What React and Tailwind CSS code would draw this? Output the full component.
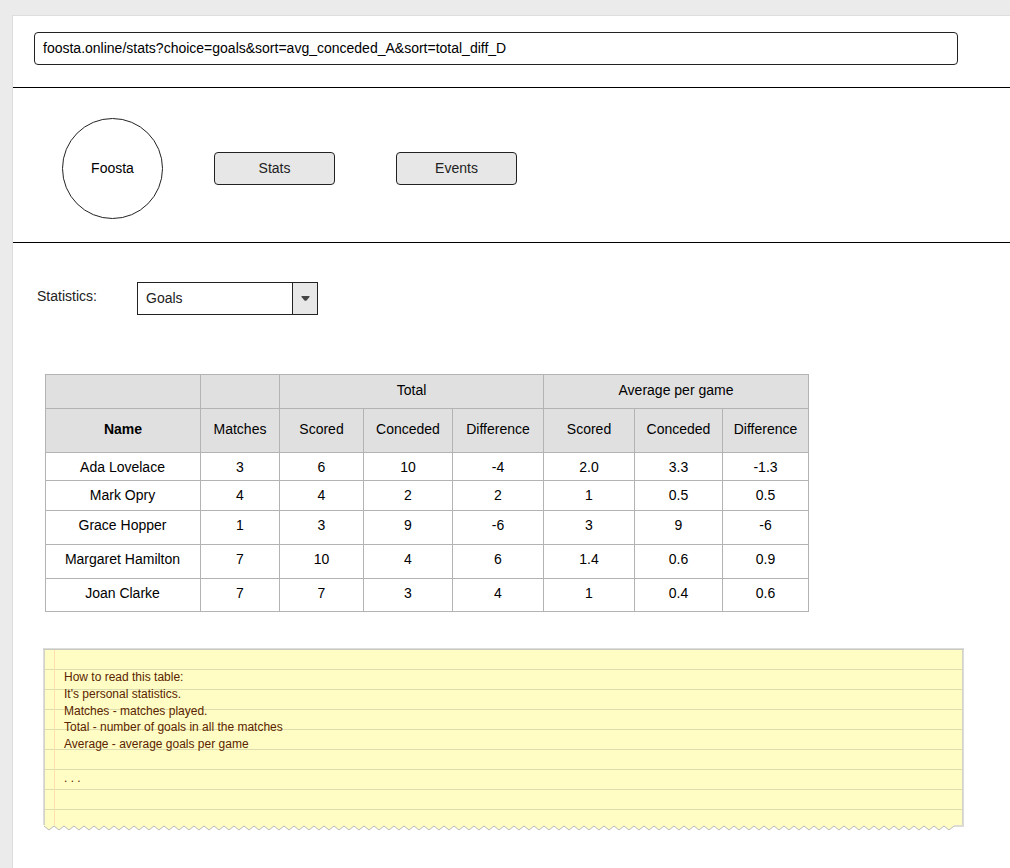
const columns = ['Name', 'Matches', 'Scored', 'Conceded', 'Difference', 'Scored', 'Conceded', 'Difference'];

const rows = [
  ['Ada Lovelace', '3', '6', '10', '-4', '2.0', '3.3', '-1.3'],
  ['Mark Opry', '4', '4', '2', '2', '1', '0.5', '0.5'],
  ['Grace Hopper', '1', '3', '9', '-6', '3', '9', '-6'],
  ['Margaret Hamilton', '7', '10', '4', '6', '1.4', '0.6', '0.9'],
  ['Joan Clarke', '7', '7', '3', '4', '1', '0.4', '0.6'],
];

const noteLines = [
  'How to read this table:',
  "It's personal statistics.",
  'Matches - matches played.',
  'Total - number of goals in all the matches',
  'Average - average goals per game',
  '\u00a0',
  '. . .',
];

// Torn paper edge: one tooth every 10 units, then a flat end.
const teeth = Array.from({ length: 91 }, (_, i) => `L${i * 10 + 6} 5 L${i * 10 + 11} 1`).join(' ');
const edge = `M1 1 ${teeth}`;

function Cell({ className = '', children }) {
  return (
    <div className={`flex justify-center whitespace-nowrap border-r border-b border-[#b3b3b3] leading-[18px] ${className}`}>
      {children}
    </div>
  );
}

function AddressBar() {
  return (
    <header className="h-[72px] border-b border-black pl-[21px] pt-4">
      <div className="flex h-[33px] w-[924px] items-center rounded border border-[#222] pb-0.5 pl-2">
        foosta.online/stats?choice=goals&amp;sort=avg_conceded_A&amp;sort=total_diff_D
      </div>
    </header>
  );
}

function Nav() {
  return (
    <nav className="flex h-[155px] items-start border-b border-black pl-[49px] pt-[30px]">
      <div className="flex size-[101px] items-center justify-center rounded-full border border-[#222] pb-0.5">Foosta</div>
      <button className="ml-[51px] mt-[34px] h-[33px] w-[121px] rounded border border-[#222] bg-[#e7e7e7] pb-0.5 text-[#222]">
        Stats
      </button>
      <button className="ml-[61px] mt-[34px] h-[33px] w-[121px] rounded border border-[#222] bg-[#e7e7e7] pb-0.5 text-[#222]">
        Events
      </button>
    </nav>
  );
}

function Filter() {
  return (
    <div className="flex pl-6 pt-[39px] text-[#222]">
      <span className="mt-[5px] w-[100px] leading-[18px]">Statistics:</span>
      <div className="flex h-[33px] w-[181px] border border-[#222]">
        <div className="flex flex-1 items-center pb-0.5 pl-2">Goals</div>
        <div className="flex w-[25px] items-center justify-center border-l border-[#222] bg-[#e7e7e7]">
          <svg width="9" height="5" viewBox="0 0 9 5">
            <path d="M1 0H8Q9 0 8.5 1L5.5 4.5Q4.5 5.2 3.5 4.5L0.5 1Q0 0 1 0Z" fill="#444" />
          </svg>
        </div>
      </div>
    </div>
  );
}

function StatsTable() {
  return (
    <div className="ml-8 mt-[59px] grid w-[764px] grid-cols-[155px_79px_84px_89px_91px_91px_88px_86px] grid-rows-[34px_44px_28px_30px_34px_34px_33px] border-l border-t border-[#b3b3b3]">
      <Cell className="bg-[#e0e0e0]" />
      <Cell className="bg-[#e0e0e0]" />
      <Cell className="col-span-3 bg-[#e0e0e0] pt-[6px]">Total</Cell>
      <Cell className="col-span-3 bg-[#e0e0e0] pt-[6px]">Average per game</Cell>
      {columns.map((name, i) => (
        <Cell key={i} className={`bg-[#e0e0e0] pt-[11px] ${i === 0 ? 'font-bold' : ''}`}>
          {name}
        </Cell>
      ))}
      {rows.map((row, r) => row.map((value, c) => (
        <Cell key={`${r}-${c}`} className={c === 0 ? 'pr-px pt-[5px]' : 'pt-[5px]'}>{value}</Cell>
      )))}
    </div>
  );
}

function Note() {
  return (
    <div className="ml-[30px] mt-9 w-[921px]">
      <div className="border-t border-[#dcdcdc]">
        <div className="border-x border-t border-x-[#dcdcdc] border-t-[#c9c9bd] bg-[#fffdc4]">
          <div className="h-[175px] border-x border-x-[#d3d3c6] bg-[repeating-linear-gradient(to_bottom,transparent_0px,transparent_19px,#ddddb0_19px,#ddddb0_20px)]">
            <div className="ml-[9px] h-full border-l border-[#ffdfae] pl-[9px] pt-[19px] text-xs leading-[16.8px] text-[#5b2400]">
              {noteLines.map((line, i) => <p key={i}>{line}</p>)}
            </div>
          </div>
        </div>
      </div>
      <svg width="921" height="6" viewBox="0 0 921 6" className="block">
        <path d={`${edge} H920 V0 H1 Z`} fill="#fffdc4" />
        <path d={edge} fill="none" stroke="#b9b9b9" />
        <path d="M911 1H920V0" fill="none" stroke="#dcdcd2" strokeWidth="2" />
      </svg>
    </div>
  );
}

export default function App() {
  return (
    <div className="h-[868px] w-[1010px] overflow-hidden bg-[#ebebeb] pl-3 pt-[15px] font-['Liberation_Sans',Arial,sans-serif] text-sm text-black">
      <main className="h-[853px] border-l border-t border-[#dedede] bg-white">
        <AddressBar />
        <Nav />
        <Filter />
        <StatsTable />
        <Note />
      </main>
    </div>
  );
}
